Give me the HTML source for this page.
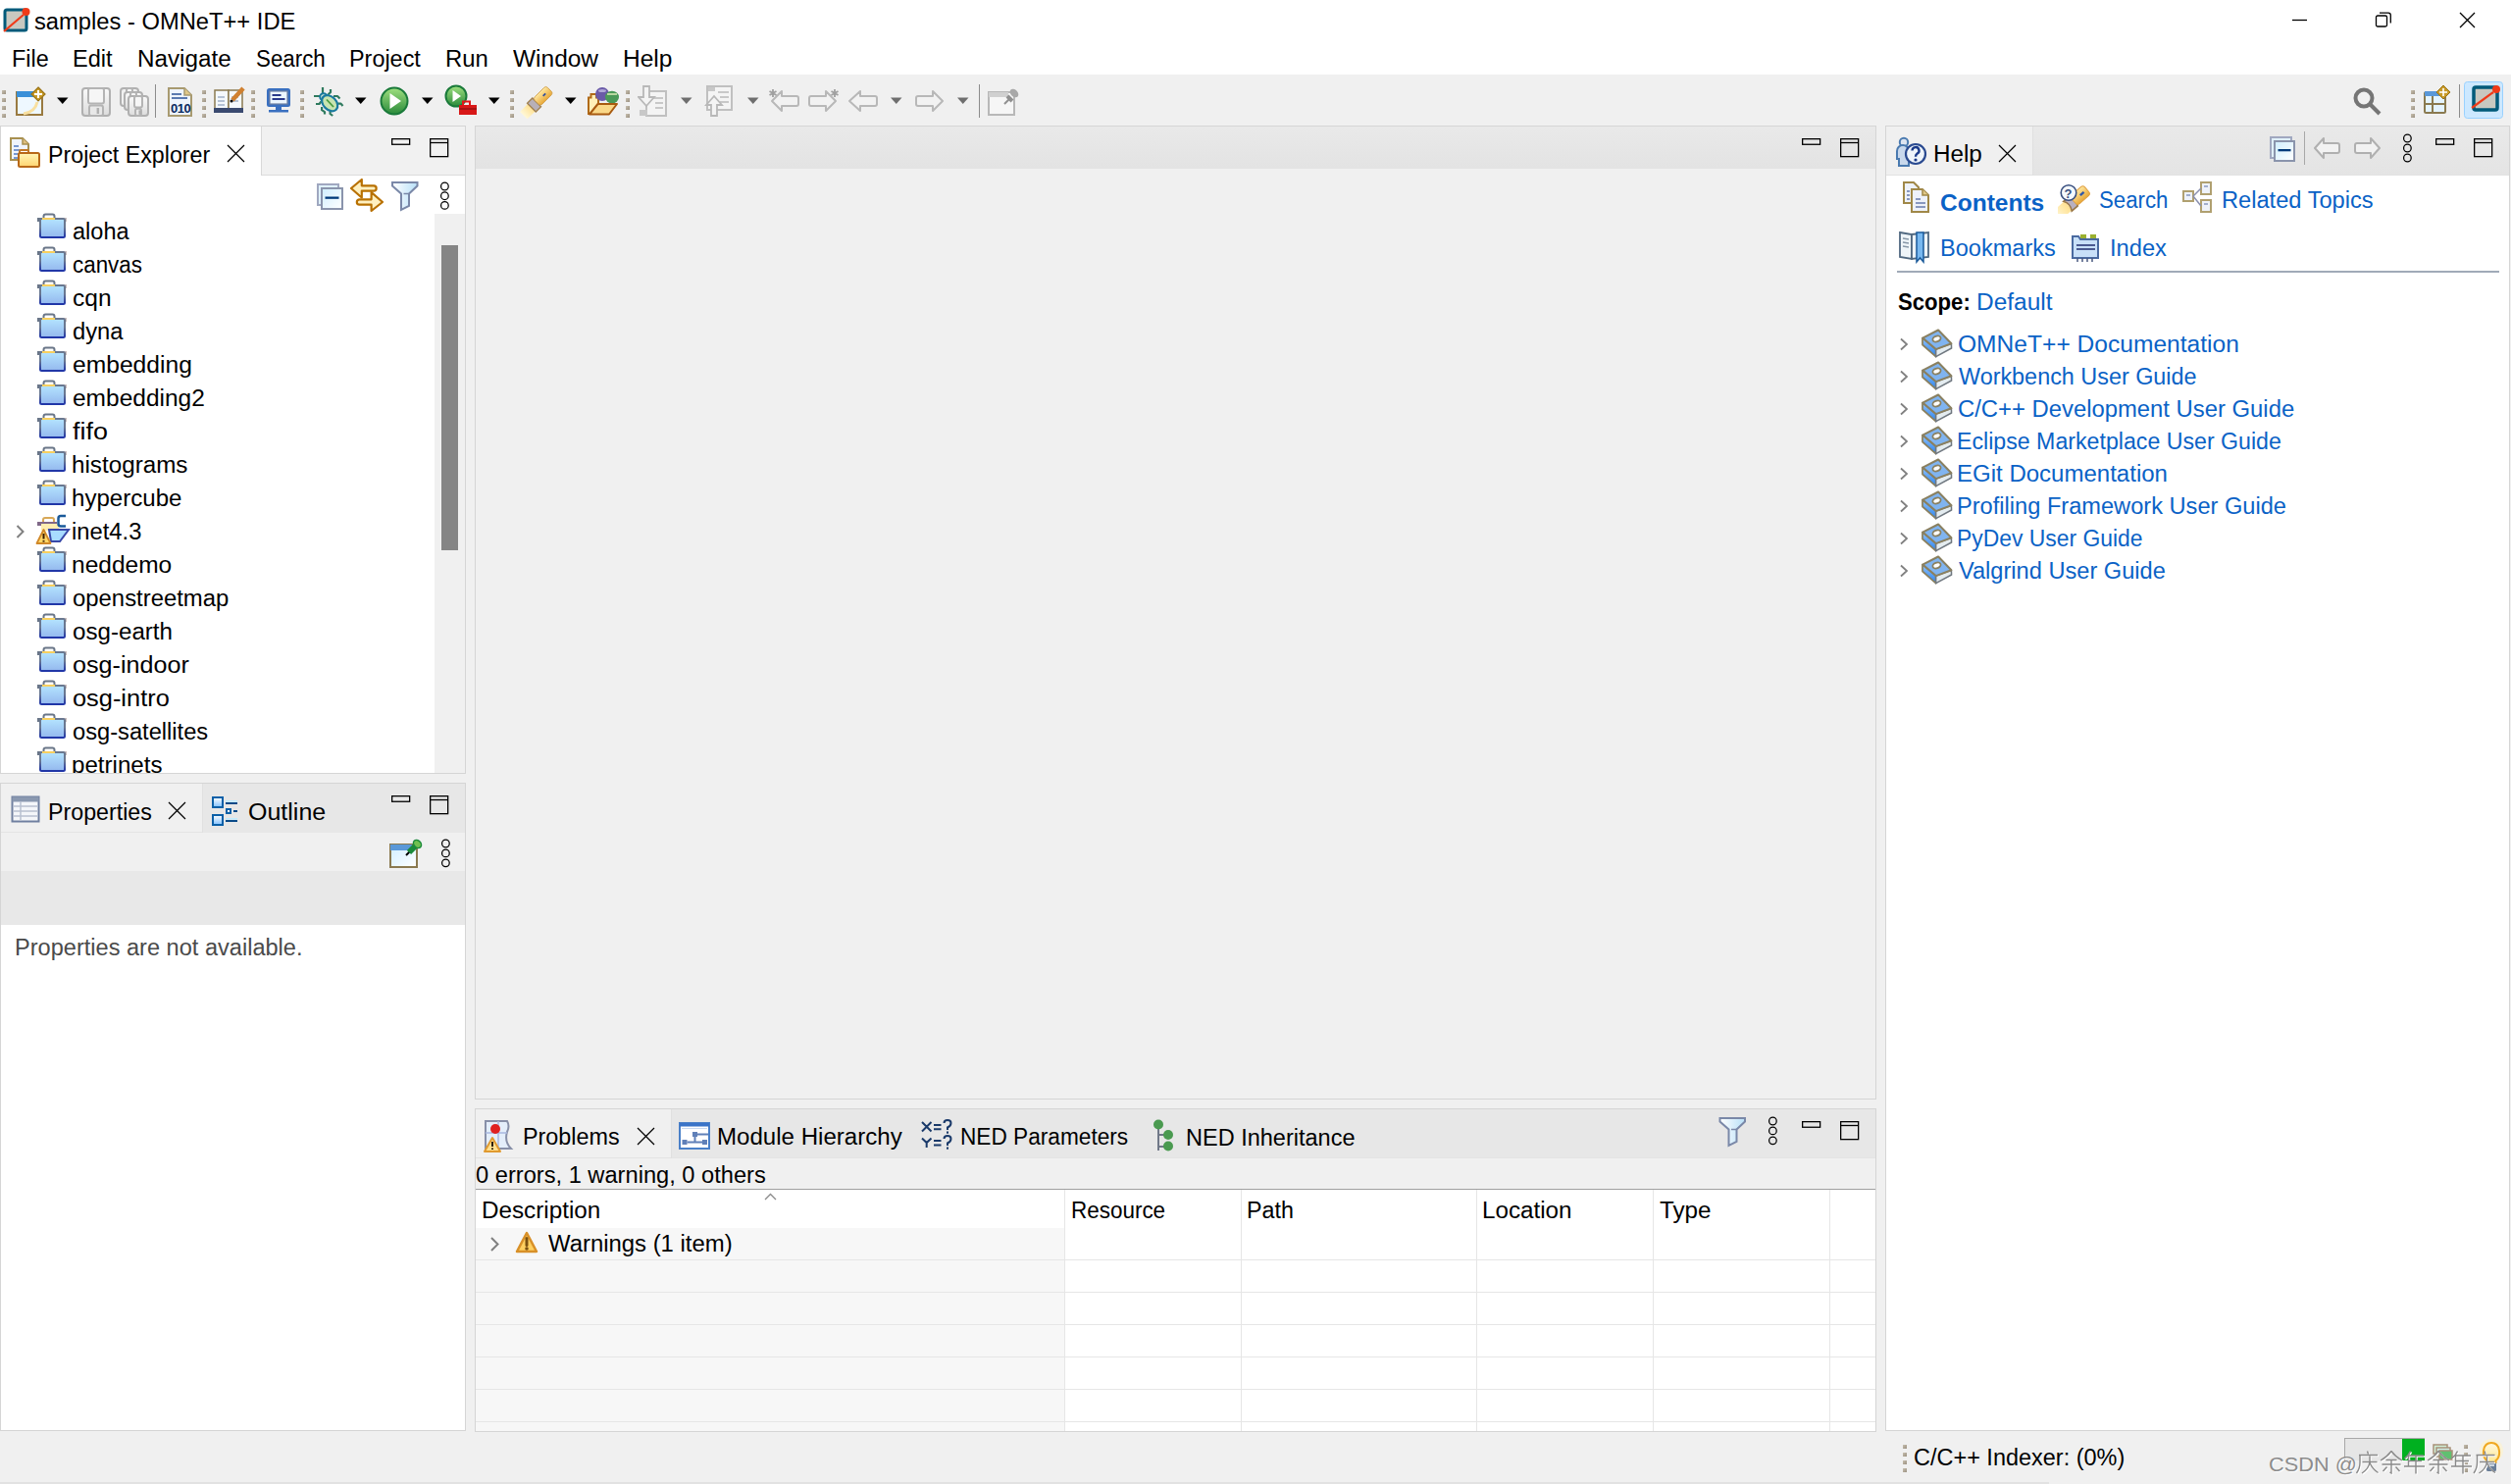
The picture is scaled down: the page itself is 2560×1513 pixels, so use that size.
<!DOCTYPE html>
<html><head><meta charset="utf-8"><style>
html,body{margin:0;padding:0;}
body{width:2560px;height:1513px;overflow:hidden;background:#f0f0f0;position:relative;font-family:"Liberation Sans",sans-serif;}
.a{position:absolute;}
.t{white-space:pre;}
svg{display:block;}
</style></head><body>
<div class="a" style="left:0px;top:0px;width:2560px;height:76px;background:#ffffff;"></div>
<div class="a" style="left:0px;top:1511px;width:2089px;height:2px;background:#e2e2e2;"></div>
<div class="a" style="left:1px;top:129px;width:473px;height:49px;background:#f1f1f1;"></div>
<div class="a" style="left:1px;top:129px;width:265px;height:50px;background:#ffffff;"></div>
<div class="a" style="left:266px;top:129px;width:1px;height:50px;background:#d8d8d8;"></div>
<div class="a" style="left:267px;top:178px;width:207px;height:1px;background:#dcdcdc;"></div>
<div class="a" style="left:1px;top:179px;width:473px;height:609px;background:#ffffff;"></div>
<div class="a" style="left:443px;top:218px;width:31px;height:570px;background:#f0f0f0;"></div>
<div class="a" style="left:450px;top:250px;width:17px;height:311px;background:#858585;"></div>
<div class="a" style="left:0px;top:128px;width:475px;height:1px;background:#d5d5d5;"></div>
<div class="a" style="left:0px;top:788px;width:475px;height:1px;background:#d5d5d5;"></div>
<div class="a" style="left:0px;top:128px;width:1px;height:661px;background:#d5d5d5;"></div>
<div class="a" style="left:474px;top:128px;width:1px;height:661px;background:#d5d5d5;"></div>
<div class="a" style="left:1px;top:799px;width:473px;height:50px;background:#e7e7e7;"></div>
<div class="a" style="left:1px;top:799px;width:205px;height:50px;background:#f0f0f0;"></div>
<div class="a" style="left:1px;top:849px;width:473px;height:39px;background:#f0f0f0;"></div>
<div class="a" style="left:1px;top:848px;width:205px;height:1px;background:#e4e4e4;"></div>
<div class="a" style="left:206px;top:799px;width:1px;height:50px;background:#e0e0e0;"></div>
<div class="a" style="left:1px;top:888px;width:473px;height:55px;background:#e8e8e8;"></div>
<div class="a" style="left:1px;top:943px;width:473px;height:515px;background:#ffffff;"></div>
<div class="a" style="left:0px;top:798px;width:475px;height:1px;background:#d5d5d5;"></div>
<div class="a" style="left:0px;top:1458px;width:475px;height:1px;background:#d5d5d5;"></div>
<div class="a" style="left:0px;top:798px;width:1px;height:661px;background:#d5d5d5;"></div>
<div class="a" style="left:474px;top:798px;width:1px;height:661px;background:#d5d5d5;"></div>
<div class="a" style="left:485px;top:129px;width:1427px;height:43px;background:linear-gradient(#e9e9e9,#e3e3e3);"></div>
<div class="a" style="left:485px;top:172px;width:1427px;height:948px;background:#f0f0f0;"></div>
<div class="a" style="left:484px;top:128px;width:1429px;height:1px;background:#d5d5d5;"></div>
<div class="a" style="left:484px;top:1120px;width:1429px;height:1px;background:#d5d5d5;"></div>
<div class="a" style="left:484px;top:128px;width:1px;height:993px;background:#d5d5d5;"></div>
<div class="a" style="left:1912px;top:128px;width:1px;height:993px;background:#d5d5d5;"></div>
<div class="a" style="left:485px;top:1131px;width:1427px;height:50px;background:#e7e7e7;"></div>
<div class="a" style="left:485px;top:1131px;width:199px;height:50px;background:#f0f0f0;"></div>
<div class="a" style="left:485px;top:1181px;width:1427px;height:31px;background:#f0f0f0;"></div>
<div class="a" style="left:485px;top:1180px;width:1427px;height:1px;background:#e4e4e4;"></div>
<div class="a" style="left:684px;top:1131px;width:1px;height:50px;background:#e0e0e0;"></div>
<div class="a" style="left:485px;top:1212px;width:1427px;height:1px;background:#a0a0a0;"></div>
<div class="a" style="left:485px;top:1213px;width:1427px;height:246px;background:#ffffff;"></div>
<div class="a" style="left:485px;top:1252px;width:600px;height:207px;background:#f7f7f7;"></div>
<div class="a" style="left:485px;top:1284px;width:1427px;height:1px;background:#e6e6e6;"></div>
<div class="a" style="left:485px;top:1317px;width:1427px;height:1px;background:#e6e6e6;"></div>
<div class="a" style="left:485px;top:1350px;width:1427px;height:1px;background:#e6e6e6;"></div>
<div class="a" style="left:485px;top:1383px;width:1427px;height:1px;background:#e6e6e6;"></div>
<div class="a" style="left:485px;top:1416px;width:1427px;height:1px;background:#e6e6e6;"></div>
<div class="a" style="left:485px;top:1449px;width:1427px;height:1px;background:#e6e6e6;"></div>
<div class="a" style="left:1085px;top:1213px;width:1px;height:246px;background:#e6e6e6;"></div>
<div class="a" style="left:1265px;top:1213px;width:1px;height:246px;background:#e6e6e6;"></div>
<div class="a" style="left:1505px;top:1213px;width:1px;height:246px;background:#e6e6e6;"></div>
<div class="a" style="left:1685px;top:1213px;width:1px;height:246px;background:#e6e6e6;"></div>
<div class="a" style="left:1865px;top:1213px;width:1px;height:246px;background:#e6e6e6;"></div>
<div class="a" style="left:484px;top:1130px;width:1429px;height:1px;background:#d5d5d5;"></div>
<div class="a" style="left:484px;top:1459px;width:1429px;height:1px;background:#d5d5d5;"></div>
<div class="a" style="left:484px;top:1130px;width:1px;height:330px;background:#d5d5d5;"></div>
<div class="a" style="left:1912px;top:1130px;width:1px;height:330px;background:#d5d5d5;"></div>
<div class="a" style="left:1923px;top:129px;width:635px;height:50px;background:linear-gradient(#e9e9e9,#e4e4e4);"></div>
<div class="a" style="left:1923px;top:129px;width:149px;height:50px;background:#f0f0f0;"></div>
<div class="a" style="left:1923px;top:179px;width:635px;height:1279px;background:#ffffff;"></div>
<div class="a" style="left:1923px;top:178px;width:635px;height:1px;background:#e2e2e2;"></div>
<div class="a" style="left:2072px;top:129px;width:1px;height:50px;background:#e0e0e0;"></div>
<div class="a" style="left:1934px;top:276px;width:614px;height:2px;background:#a0aab8;"></div>
<div class="a" style="left:1922px;top:128px;width:637px;height:1px;background:#d5d5d5;"></div>
<div class="a" style="left:1922px;top:1458px;width:637px;height:1px;background:#d5d5d5;"></div>
<div class="a" style="left:1922px;top:128px;width:1px;height:1331px;background:#d5d5d5;"></div>
<div class="a" style="left:2558px;top:128px;width:1px;height:1331px;background:#d5d5d5;"></div>
<div class="a t" style="left:35.11px;top:11.03px;font-size:23px;line-height:23px;color:#000;font-weight:400;transform:scaleX(1.0316);transform-origin:0 0;">samples - OMNeT++ IDE</div>
<div class="a t" style="left:12.13px;top:49.33px;font-size:23px;line-height:23px;color:#000;font-weight:400;transform:scaleX(1.0155);transform-origin:0 0;">File</div>
<div class="a t" style="left:73.92px;top:49.33px;font-size:23px;line-height:23px;color:#000;font-weight:400;transform:scaleX(1.0238);transform-origin:0 0;">Edit</div>
<div class="a t" style="left:140.06px;top:49.33px;font-size:23px;line-height:23px;color:#000;font-weight:400;transform:scaleX(1.0537);transform-origin:0 0;">Navigate</div>
<div class="a t" style="left:260.50px;top:49.33px;font-size:23px;line-height:23px;color:#000;font-weight:400;transform:scaleX(0.9704);transform-origin:0 0;">Search</div>
<div class="a t" style="left:355.83px;top:49.33px;font-size:23px;line-height:23px;color:#000;font-weight:400;transform:scaleX(1.0176);transform-origin:0 0;">Project</div>
<div class="a t" style="left:453.89px;top:49.33px;font-size:23px;line-height:23px;color:#000;font-weight:400;transform:scaleX(1.0363);transform-origin:0 0;">Run</div>
<div class="a t" style="left:523.38px;top:49.33px;font-size:23px;line-height:23px;color:#000;font-weight:400;transform:scaleX(1.0640);transform-origin:0 0;">Window</div>
<div class="a t" style="left:635.04px;top:49.33px;font-size:23px;line-height:23px;color:#000;font-weight:400;transform:scaleX(1.0650);transform-origin:0 0;">Help</div>
<div class="a t" style="left:48.54px;top:146.63px;font-size:23px;line-height:23px;color:#000;font-weight:400;transform:scaleX(1.0095);transform-origin:0 0;">Project Explorer</div>
<div class="a" style="left:0px;top:218px;width:443px;height:570px;overflow:hidden">
<div class="a t" style="left:73.66px;top:7.03px;font-size:23px;line-height:23px;color:#000;font-weight:400;transform:scaleX(1.0232);transform-origin:0 0;">aloha</div>
<div class="a t" style="left:73.70px;top:41.03px;font-size:23px;line-height:23px;color:#000;font-weight:400;transform:scaleX(0.9735);transform-origin:0 0;">canvas</div>
<div class="a t" style="left:73.62px;top:75.03px;font-size:23px;line-height:23px;color:#000;font-weight:400;transform:scaleX(1.0654);transform-origin:0 0;">cqn</div>
<div class="a t" style="left:73.65px;top:109.03px;font-size:23px;line-height:23px;color:#000;font-weight:400;transform:scaleX(1.0332);transform-origin:0 0;">dyna</div>
<div class="a t" style="left:73.62px;top:143.03px;font-size:23px;line-height:23px;color:#000;font-weight:400;transform:scaleX(1.0706);transform-origin:0 0;">embedding</div>
<div class="a t" style="left:73.62px;top:177.03px;font-size:23px;line-height:23px;color:#000;font-weight:400;transform:scaleX(1.0647);transform-origin:0 0;">embedding2</div>
<div class="a t" style="left:74.20px;top:211.03px;font-size:23px;line-height:23px;color:#000;font-weight:400;transform:scaleX(1.1719);transform-origin:0 0;">fifo</div>
<div class="a t" style="left:72.90px;top:245.03px;font-size:23px;line-height:23px;color:#000;font-weight:400;transform:scaleX(1.0531);transform-origin:0 0;">histograms</div>
<div class="a t" style="left:72.91px;top:279.03px;font-size:23px;line-height:23px;color:#000;font-weight:400;transform:scaleX(1.0469);transform-origin:0 0;">hypercube</div>
<div class="a t" style="left:73.06px;top:313.03px;font-size:23px;line-height:23px;color:#000;font-weight:400;transform:scaleX(1.0333);transform-origin:0 0;">inet4.3</div>
<div class="a t" style="left:73.01px;top:347.03px;font-size:23px;line-height:23px;color:#000;font-weight:400;transform:scaleX(1.0653);transform-origin:0 0;">neddemo</div>
<div class="a t" style="left:73.64px;top:381.03px;font-size:23px;line-height:23px;color:#000;font-weight:400;transform:scaleX(1.0385);transform-origin:0 0;">openstreetmap</div>
<div class="a t" style="left:73.63px;top:415.03px;font-size:23px;line-height:23px;color:#000;font-weight:400;transform:scaleX(1.0498);transform-origin:0 0;">osg-earth</div>
<div class="a t" style="left:73.59px;top:449.03px;font-size:23px;line-height:23px;color:#000;font-weight:400;transform:scaleX(1.0930);transform-origin:0 0;">osg-indoor</div>
<div class="a t" style="left:73.58px;top:483.03px;font-size:23px;line-height:23px;color:#000;font-weight:400;transform:scaleX(1.1035);transform-origin:0 0;">osg-intro</div>
<div class="a t" style="left:73.65px;top:517.03px;font-size:23px;line-height:23px;color:#000;font-weight:400;transform:scaleX(1.0296);transform-origin:0 0;">osg-satellites</div>
<div class="a t" style="left:73.03px;top:551.03px;font-size:23px;line-height:23px;color:#000;font-weight:400;transform:scaleX(1.0488);transform-origin:0 0;">petrinets</div>
</div>
<div class="a t" style="left:48.84px;top:816.83px;font-size:23px;line-height:23px;color:#000;font-weight:400;transform:scaleX(1.0094);transform-origin:0 0;">Properties</div>
<div class="a t" style="left:252.88px;top:816.83px;font-size:23px;line-height:23px;color:#000;font-weight:400;transform:scaleX(1.0870);transform-origin:0 0;">Outline</div>
<div class="a t" style="left:15.31px;top:955.03px;font-size:23px;line-height:23px;color:#4a4a4a;font-weight:400;transform:scaleX(1.0249);transform-origin:0 0;">Properties are not available.</div>
<div class="a t" style="left:533.13px;top:1148.03px;font-size:23px;line-height:23px;color:#000;font-weight:400;transform:scaleX(1.0156);transform-origin:0 0;">Problems</div>
<div class="a t" style="left:730.77px;top:1148.03px;font-size:23px;line-height:23px;color:#000;font-weight:400;transform:scaleX(1.0473);transform-origin:0 0;">Module Hierarchy</div>
<div class="a t" style="left:978.59px;top:1148.03px;font-size:23px;line-height:23px;color:#000;font-weight:400;transform:scaleX(0.9846);transform-origin:0 0;">NED Parameters</div>
<div class="a t" style="left:1208.52px;top:1148.53px;font-size:23px;line-height:23px;color:#000;font-weight:400;transform:scaleX(1.0220);transform-origin:0 0;">NED Inheritance</div>
<div class="a t" style="left:485.05px;top:1187.03px;font-size:23px;line-height:23px;color:#000;font-weight:400;transform:scaleX(1.0284);transform-origin:0 0;">0 errors, 1 warning, 0 others</div>
<div class="a t" style="left:491.06px;top:1222.63px;font-size:23px;line-height:23px;color:#000;font-weight:400;transform:scaleX(1.0539);transform-origin:0 0;">Description</div>
<div class="a t" style="left:1091.60px;top:1222.63px;font-size:23px;line-height:23px;color:#000;font-weight:400;transform:scaleX(0.9762);transform-origin:0 0;">Resource</div>
<div class="a t" style="left:1271.04px;top:1222.63px;font-size:23px;line-height:23px;color:#000;font-weight:400;transform:scaleX(1.0126);transform-origin:0 0;">Path</div>
<div class="a t" style="left:1510.76px;top:1222.63px;font-size:23px;line-height:23px;color:#000;font-weight:400;transform:scaleX(1.0523);transform-origin:0 0;">Location</div>
<div class="a t" style="left:1691.52px;top:1222.63px;font-size:23px;line-height:23px;color:#000;font-weight:400;transform:scaleX(1.0534);transform-origin:0 0;">Type</div>
<div class="a t" style="left:558.68px;top:1257.03px;font-size:23px;line-height:23px;color:#000;font-weight:400;transform:scaleX(1.0388);transform-origin:0 0;">Warnings (1 item)</div>
<div class="a t" style="left:1970.66px;top:146.23px;font-size:23px;line-height:23px;color:#000;font-weight:400;transform:scaleX(1.0538);transform-origin:0 0;">Help</div>
<div class="a t" style="left:1977.82px;top:196.33px;font-size:23px;line-height:23px;color:#0a62c6;font-weight:700;transform:scaleX(1.0660);transform-origin:0 0;">Contents</div>
<div class="a t" style="left:2139.50px;top:193.03px;font-size:23px;line-height:23px;color:#0a62c6;font-weight:400;transform:scaleX(0.9662);transform-origin:0 0;">Search</div>
<div class="a t" style="left:2265.11px;top:193.03px;font-size:23px;line-height:23px;color:#0a62c6;font-weight:400;transform:scaleX(1.0279);transform-origin:0 0;">Related Topics</div>
<div class="a t" style="left:1977.52px;top:242.33px;font-size:23px;line-height:23px;color:#0a62c6;font-weight:400;transform:scaleX(1.0244);transform-origin:0 0;">Bookmarks</div>
<div class="a t" style="left:2150.87px;top:242.33px;font-size:23px;line-height:23px;color:#0a62c6;font-weight:400;transform:scaleX(1.0290);transform-origin:0 0;">Index</div>
<div class="a t" style="left:1935.34px;top:297.03px;font-size:23px;line-height:23px;color:#000;font-weight:700;transform:scaleX(0.9617);transform-origin:0 0;">Scope:</div>
<div class="a t" style="left:2015.34px;top:297.03px;font-size:23px;line-height:23px;color:#0a62c6;font-weight:400;transform:scaleX(1.0630);transform-origin:0 0;">Default</div>
<div class="a t" style="left:1995.89px;top:339.83px;font-size:23px;line-height:23px;color:#0a62c6;font-weight:400;transform:scaleX(1.0688);transform-origin:0 0;">OMNeT++ Documentation</div>
<div class="a t" style="left:1996.88px;top:372.83px;font-size:23px;line-height:23px;color:#0a62c6;font-weight:400;transform:scaleX(1.0165);transform-origin:0 0;">Workbench User Guide</div>
<div class="a t" style="left:1995.81px;top:405.83px;font-size:23px;line-height:23px;color:#0a62c6;font-weight:400;transform:scaleX(1.0364);transform-origin:0 0;">C/C++ Development User Guide</div>
<div class="a t" style="left:1995.15px;top:438.83px;font-size:23px;line-height:23px;color:#0a62c6;font-weight:400;transform:scaleX(1.0071);transform-origin:0 0;">Eclipse Marketplace User Guide</div>
<div class="a t" style="left:1995.08px;top:471.83px;font-size:23px;line-height:23px;color:#0a62c6;font-weight:400;transform:scaleX(1.0443);transform-origin:0 0;">EGit Documentation</div>
<div class="a t" style="left:1995.11px;top:504.83px;font-size:23px;line-height:23px;color:#0a62c6;font-weight:400;transform:scaleX(1.0268);transform-origin:0 0;">Profiling Framework User Guide</div>
<div class="a t" style="left:1995.17px;top:537.83px;font-size:23px;line-height:23px;color:#0a62c6;font-weight:400;transform:scaleX(0.9953);transform-origin:0 0;">PyDev User Guide</div>
<div class="a t" style="left:1996.88px;top:570.83px;font-size:23px;line-height:23px;color:#0a62c6;font-weight:400;transform:scaleX(1.0262);transform-origin:0 0;">Valgrind User Guide</div>
<div class="a t" style="left:1951.43px;top:1475.23px;font-size:23px;line-height:23px;color:#000;font-weight:400;transform:scaleX(1.0207);transform-origin:0 0;">C/C++ Indexer: (0%)</div>
<svg width="0" height="0" style="position:absolute"><defs>
<linearGradient id="gFoldB" x1="0" y1="0" x2="0" y2="1"><stop offset="0" stop-color="#b4e4ff"/><stop offset="1" stop-color="#94b8ee"/></linearGradient>
<linearGradient id="gFoldS" x1="0" y1="0" x2="0" y2="1"><stop offset="0" stop-color="#6a7890"/><stop offset="0.45" stop-color="#6a7890"/><stop offset="1" stop-color="#1f35a8"/></linearGradient>
<linearGradient id="gYel" x1="0" y1="0" x2="0" y2="1"><stop offset="0" stop-color="#fff6b8"/><stop offset="1" stop-color="#ffd470"/></linearGradient>
<linearGradient id="gLB" x1="0" y1="0" x2="1" y2="1"><stop offset="0" stop-color="#cfeeff"/><stop offset="1" stop-color="#ffffff"/></linearGradient>
<linearGradient id="gGrn" x1="0" y1="0" x2="0" y2="1"><stop offset="0" stop-color="#a0e080"/><stop offset="1" stop-color="#2a8a3a"/></linearGradient>
<linearGradient id="gGray" x1="0" y1="0" x2="0" y2="1"><stop offset="0" stop-color="#fafafa"/><stop offset="1" stop-color="#dcdcdc"/></linearGradient>
<linearGradient id="gGold" x1="0" y1="0" x2="1" y2="0"><stop offset="0" stop-color="#fff4c0"/><stop offset="1" stop-color="#e8b040"/></linearGradient>
<linearGradient id="gTip" x1="0" y1="0" x2="1" y2="0"><stop offset="0" stop-color="#fff8d8"/><stop offset="1" stop-color="#ffe090"/></linearGradient><linearGradient id="gPen" x1="0" y1="0" x2="0" y2="1"><stop offset="0" stop-color="#ffe8a0"/><stop offset="1" stop-color="#e8a838"/></linearGradient>
<linearGradient id="gOut" x1="0" y1="0" x2="0" y2="1"><stop offset="0" stop-color="#ffffff"/><stop offset="1" stop-color="#80c0ff"/></linearGradient>
<linearGradient id="gSpine" x1="0" y1="0" x2="0" y2="1"><stop offset="0" stop-color="#90c0f8"/><stop offset="1" stop-color="#2a84f0"/></linearGradient>
<linearGradient id="gBulb" x1="0" y1="0" x2="0" y2="1"><stop offset="0" stop-color="#fff8e0"/><stop offset="1" stop-color="#ffe890"/></linearGradient>
<linearGradient id="gFilt" x1="0" y1="0" x2="1" y2="0"><stop offset="0" stop-color="#ffffff"/><stop offset="1" stop-color="#b8e0f8"/></linearGradient>
<linearGradient id="gGrip" x1="0" y1="0" x2="1" y2="1"><stop offset="0" stop-color="#c8c0b0"/><stop offset="1" stop-color="#9a9080"/></linearGradient>
</defs></svg>
<svg class="a" style="left:2px;top:6px;" width="30" height="30" viewBox="0 0 30 30"><rect x="3" y="4" width="22" height="21" rx="2" fill="#c8c8c0" stroke="#005a7a" stroke-width="3"/><line x1="2" y1="26" x2="22" y2="9" stroke="#f03a18" stroke-width="2.2"/><circle cx="24.5" cy="6" r="4" fill="#f03a18"/></svg>
<svg class="a" style="left:2330px;top:12px;" width="30" height="20" viewBox="0 0 30 20"><line x1="7" y1="8.5" x2="22" y2="8.5" stroke="#000" stroke-width="1.3"/></svg>
<svg class="a" style="left:2418px;top:8px;" width="24" height="24" viewBox="0 0 24 24"><rect x="4.5" y="8" width="11" height="11" rx="1.5" fill="none" stroke="#000" stroke-width="1.3"/><path d="M8 5.2 H17 a2.3 2.3 0 0 1 2.3 2.3 V15.5" fill="none" stroke="#000" stroke-width="1.3"/></svg>
<svg class="a" style="left:2503px;top:8px;" width="26" height="26" viewBox="0 0 26 26"><path d="M5 5 L20 20 M20 5 L5 20" stroke="#000" stroke-width="1.3"/></svg>
<svg class="a" style="left:2px;top:92px;" width="4" height="28" viewBox="0 0 4 28"><rect x="0" y="0" width="4" height="4" fill="url(#gGrip)"/><rect x="0" y="8" width="4" height="4" fill="url(#gGrip)"/><rect x="0" y="16" width="4" height="4" fill="url(#gGrip)"/><rect x="0" y="24" width="4" height="4" fill="url(#gGrip)"/></svg>
<svg class="a" style="left:206px;top:92px;" width="4" height="28" viewBox="0 0 4 28"><rect x="0" y="0" width="4" height="4" fill="url(#gGrip)"/><rect x="0" y="8" width="4" height="4" fill="url(#gGrip)"/><rect x="0" y="16" width="4" height="4" fill="url(#gGrip)"/><rect x="0" y="24" width="4" height="4" fill="url(#gGrip)"/></svg>
<svg class="a" style="left:256px;top:92px;" width="4" height="28" viewBox="0 0 4 28"><rect x="0" y="0" width="4" height="4" fill="url(#gGrip)"/><rect x="0" y="8" width="4" height="4" fill="url(#gGrip)"/><rect x="0" y="16" width="4" height="4" fill="url(#gGrip)"/><rect x="0" y="24" width="4" height="4" fill="url(#gGrip)"/></svg>
<svg class="a" style="left:306px;top:92px;" width="4" height="28" viewBox="0 0 4 28"><rect x="0" y="0" width="4" height="4" fill="url(#gGrip)"/><rect x="0" y="8" width="4" height="4" fill="url(#gGrip)"/><rect x="0" y="16" width="4" height="4" fill="url(#gGrip)"/><rect x="0" y="24" width="4" height="4" fill="url(#gGrip)"/></svg>
<svg class="a" style="left:520px;top:92px;" width="4" height="28" viewBox="0 0 4 28"><rect x="0" y="0" width="4" height="4" fill="url(#gGrip)"/><rect x="0" y="8" width="4" height="4" fill="url(#gGrip)"/><rect x="0" y="16" width="4" height="4" fill="url(#gGrip)"/><rect x="0" y="24" width="4" height="4" fill="url(#gGrip)"/></svg>
<svg class="a" style="left:638px;top:92px;" width="4" height="28" viewBox="0 0 4 28"><rect x="0" y="0" width="4" height="4" fill="url(#gGrip)"/><rect x="0" y="8" width="4" height="4" fill="url(#gGrip)"/><rect x="0" y="16" width="4" height="4" fill="url(#gGrip)"/><rect x="0" y="24" width="4" height="4" fill="url(#gGrip)"/></svg>
<svg class="a" style="left:2458px;top:92px;" width="4" height="28" viewBox="0 0 4 28"><rect x="0" y="0" width="4" height="4" fill="url(#gGrip)"/><rect x="0" y="8" width="4" height="4" fill="url(#gGrip)"/><rect x="0" y="16" width="4" height="4" fill="url(#gGrip)"/><rect x="0" y="24" width="4" height="4" fill="url(#gGrip)"/></svg>
<svg class="a" style="left:58px;top:99px;" width="12" height="8" viewBox="0 0 12 8"><path d="M0 0.5 H11.5 L5.75 7 Z" fill="#000"/></svg>
<svg class="a" style="left:362px;top:99px;" width="12" height="8" viewBox="0 0 12 8"><path d="M0 0.5 H11.5 L5.75 7 Z" fill="#000"/></svg>
<svg class="a" style="left:430px;top:99px;" width="12" height="8" viewBox="0 0 12 8"><path d="M0 0.5 H11.5 L5.75 7 Z" fill="#000"/></svg>
<svg class="a" style="left:498px;top:99px;" width="12" height="8" viewBox="0 0 12 8"><path d="M0 0.5 H11.5 L5.75 7 Z" fill="#000"/></svg>
<svg class="a" style="left:576px;top:99px;" width="12" height="8" viewBox="0 0 12 8"><path d="M0 0.5 H11.5 L5.75 7 Z" fill="#000"/></svg>
<svg class="a" style="left:694px;top:99px;" width="12" height="8" viewBox="0 0 12 8"><path d="M0 0.5 H11.5 L5.75 7 Z" fill="#6e6e6e"/></svg>
<svg class="a" style="left:762px;top:99px;" width="12" height="8" viewBox="0 0 12 8"><path d="M0 0.5 H11.5 L5.75 7 Z" fill="#6e6e6e"/></svg>
<svg class="a" style="left:908px;top:99px;" width="12" height="8" viewBox="0 0 12 8"><path d="M0 0.5 H11.5 L5.75 7 Z" fill="#6e6e6e"/></svg>
<svg class="a" style="left:976px;top:99px;" width="12" height="8" viewBox="0 0 12 8"><path d="M0 0.5 H11.5 L5.75 7 Z" fill="#6e6e6e"/></svg>
<div class="a" style="left:158px;top:86px;width:1px;height:34px;background:#8c8c8c;"></div>
<div class="a" style="left:998px;top:86px;width:1px;height:34px;background:#8c8c8c;"></div>
<div class="a" style="left:2507px;top:86px;width:1px;height:34px;background:#8c8c8c;"></div>
<svg class="a" style="left:14px;top:86px;" width="36" height="34" viewBox="0 0 36 34"><rect x="3" y="8" width="26" height="23" fill="#eef8ff" stroke="#9a7a40" stroke-width="2"/><rect x="3" y="7" width="24" height="6" fill="#3a90d8"/><path d="M10 30 Q22 28 24 18" stroke="#f8e0a0" stroke-width="3" fill="none"/><path d="M25 3 L32 10 L25 17 L18 10 Z" fill="#c89a28" stroke="#9a7418" stroke-width="1.2"/><path d="M25 6 V14 M21 10 H29" stroke="#fff" stroke-width="2"/></svg>
<svg class="a" style="left:82px;top:88px;" width="32" height="32" viewBox="0 0 32 32"><rect x="2" y="2" width="28" height="28" rx="3" fill="url(#gGray)" stroke="#b0b0b0" stroke-width="2"/><rect x="8" y="2" width="16" height="15.600000000000001" rx="2" fill="#f6f6f6" stroke="#b4b4b4" stroke-width="2"/><rect x="9" y="19.6" width="14" height="10.4" rx="2" fill="#e8e8e8" stroke="#b4b4b4" stroke-width="2"/><rect x="16.6" y="22.0" width="2.5" height="6.0" fill="#b0b0b0"/></svg>
<svg class="a" style="left:121px;top:88px;" width="32" height="32" viewBox="0 0 32 32"><rect x="2" y="2" width="18" height="18" rx="3" fill="#f0f0f0" stroke="#b0b0b0" stroke-width="2"/><rect x="8" y="2" width="6" height="10.4" rx="2" fill="#f6f6f6" stroke="#b4b4b4" stroke-width="2"/><rect x="9" y="13.4" width="4" height="6.6" rx="2" fill="#e8e8e8" stroke="#b4b4b4" stroke-width="2"/><rect x="11.4" y="15.0" width="2.5" height="4.0" fill="#b0b0b0"/><rect x="6" y="6" width="18" height="18" rx="3" fill="url(#gGray)" stroke="#b0b0b0" stroke-width="2"/><rect x="12" y="6" width="6" height="10.4" rx="2" fill="#f6f6f6" stroke="#b4b4b4" stroke-width="2"/><rect x="13" y="17.4" width="4" height="6.6" rx="2" fill="#e8e8e8" stroke="#b4b4b4" stroke-width="2"/><rect x="15.4" y="19.0" width="2.5" height="4.0" fill="#b0b0b0"/><rect x="10" y="10" width="20" height="20" rx="3" fill="url(#gGray)" stroke="#b0b0b0" stroke-width="2"/><rect x="16" y="10" width="8" height="11.440000000000001" rx="2" fill="#f6f6f6" stroke="#b4b4b4" stroke-width="2"/><rect x="17" y="22.64" width="6" height="7.359999999999999" rx="2" fill="#e8e8e8" stroke="#b4b4b4" stroke-width="2"/><rect x="20.44" y="24.4" width="2.5" height="4.4" fill="#b0b0b0"/></svg>
<svg class="a" style="left:170px;top:88px;" width="30" height="32" viewBox="0 0 30 32"><path d="M2 2 H18 L25 9 V30 H2 Z" fill="#eef4fc" stroke="#a89a70" stroke-width="2"/><path d="M18 2 V9 H25" fill="#e0c888" stroke="#a89a70" stroke-width="1.5"/><rect x="5" y="7" width="10" height="2" fill="#5a7ab0"/><rect x="5" y="11" width="16" height="2" fill="#5a7ab0"/><text x="4" y="27" font-family="Liberation Sans" font-weight="700" font-size="13" fill="#0a2a60" letter-spacing="-0.5">010</text></svg>
<svg class="a" style="left:218px;top:88px;" width="32" height="30" viewBox="0 0 32 30"><rect x="1" y="4" width="14" height="20" fill="#f4f8fc" stroke="#8a7a50" stroke-width="1.5"/><rect x="15" y="4" width="14" height="20" fill="#f4f8fc" stroke="#8a7a50" stroke-width="1.5"/><rect x="0" y="22" width="30" height="5" fill="#3a4a70"/><path d="M4 11 H11 M4 15 H11 M4 19 H11 M18 11 H25 M18 15 H25" stroke="#a0b0c8" stroke-width="1.5"/><path d="M19 14 L30 2" stroke="#d08030" stroke-width="4.5"/><circle cx="18" cy="15" r="1.5" fill="#000"/></svg>
<svg class="a" style="left:270px;top:88px;" width="28" height="28" viewBox="0 0 28 28"><rect x="2" y="2" width="24" height="19" rx="2.5" fill="#3a70c0"/><rect x="5" y="5" width="18" height="13" fill="#ecf6ff" stroke="#7080a0" stroke-width="1.2"/><rect x="7.5" y="8" width="9" height="2" fill="#2a3a8a"/><rect x="7.5" y="12" width="13" height="2" fill="#2a3a8a"/><rect x="11" y="21" width="6" height="3" fill="#3a70c0"/><rect x="4" y="24" width="20" height="2.5" fill="#3a70c0"/></svg>
<svg class="a" style="left:316px;top:85px;" width="40" height="36" viewBox="0 0 40 36"><g stroke="#2f7a5e" stroke-width="2.2" fill="none" stroke-linejoin="round"><path d="M13 4 V10 M21 6 V9 L18.5 11.5 M4 13 H10 M24 13 H28 L30.5 15.5 M6 21 H9.5 L11.5 18.5 M27.5 20.6 H31.5 L33.5 23 M12.1 24 V27.2 L15 29.1 V31.5 M20.6 27.5 V31 L23.2 33"/></g><circle cx="13.8" cy="13.8" r="3.6" fill="#e0f0d8" stroke="#1a7aa0" stroke-width="2"/><ellipse cx="20.2" cy="20.2" rx="6.6" ry="9.3" transform="rotate(-45 20.2 20.2)" fill="#c8e4b0" stroke="#1a7aa0" stroke-width="2.2"/><path d="M17 16.5 L24 24" stroke="#4a9a40" stroke-width="1.8"/></svg>
<svg class="a" style="left:386px;top:87px;" width="32" height="32" viewBox="0 0 32 32"><circle cx="16" cy="16" r="13.5" fill="url(#gGrn)" stroke="#1a7a3a" stroke-width="2"/><path d="M11.5 8 L23 16 L11.5 24 Z" fill="#fff"/></svg>
<svg class="a" style="left:452px;top:85px;" width="36" height="34" viewBox="0 0 36 34"><circle cx="13" cy="13" r="10.5" fill="url(#gGrn)" stroke="#1a7a3a" stroke-width="2"/><path d="M9.5 7 L18 13 L9.5 19 Z" fill="#fff"/><rect x="20" y="18.5" width="7" height="5" fill="none" stroke="#e01818" stroke-width="2"/><rect x="16" y="22" width="18" height="10" fill="#d81818"/><path d="M16 26 H34" stroke="#8a1010" stroke-width="1.2"/></svg>
<svg class="a" style="left:530px;top:87px;" width="36" height="34" viewBox="0 0 36 34"><g transform="translate(17.5 17) rotate(-45) scale(0.88)"><rect x="-22" y="-6" width="14" height="12" fill="url(#gTip)"/><rect x="-9" y="-7" width="8.5" height="14" fill="#b8b0b8" stroke="#a08050" stroke-width="1.5"/><rect x="-0.5" y="-6" width="21" height="12" rx="3" fill="url(#gPen)" stroke="#d0a050" stroke-width="1"/><rect x="10" y="-1" width="4" height="2" fill="#3050a0"/></g></svg>
<svg class="a" style="left:596px;top:85px;" width="40" height="36" viewBox="0 0 40 36"><path d="M4 31 V14.5 H6.5 V11 H12 V14.5 H14 V31 Z" fill="#fff0b8" stroke="#b06a18" stroke-width="2"/><circle cx="18" cy="11" r="7" fill="#6a5aa8"/><ellipse cx="18" cy="7.5" rx="4" ry="1.5" fill="#b0a8d8"/><ellipse cx="28" cy="14" rx="7" ry="6.3" fill="#4a9a58"/><rect x="23" y="10" width="10" height="2" fill="#b8d8a0"/><path d="M5 31.5 L13.5 21 H33 L25 31.5 Z" fill="#fad888" stroke="#a85a10" stroke-width="2" stroke-linejoin="round"/></svg>
<svg class="a" style="left:650px;top:86px;" width="32" height="34" viewBox="0 0 32 34"><rect x="9" y="7" width="20" height="25" fill="#f4f4f4" stroke="#c0c0c0" stroke-width="2"/><path d="M14 14 H26 M18 19 H26 M18 24 H26" stroke="#c8c8c8" stroke-width="2"/><path d="M6 2 H12 V13 H17 L9 22 L1 13 H6 Z" fill="#f4f4f4" stroke="#b8b8b8" stroke-width="1.8"/><rect x="2" y="26" width="8" height="6" fill="#c8c8c8"/></svg>
<svg class="a" style="left:718px;top:86px;" width="32" height="34" viewBox="0 0 32 34"><rect x="3" y="2" width="25" height="24" fill="#f4f4f4" stroke="#c0c0c0" stroke-width="2"/><rect x="4" y="3" width="7" height="4" fill="#c8c8c8"/><path d="M14 8 H25 M16 13 H25 M16 18 H25" stroke="#c8c8c8" stroke-width="2"/><path d="M7 32 H13 V21 H18 L10 12 L2 21 H7 Z" fill="#f4f4f4" stroke="#b8b8b8" stroke-width="1.8"/></svg>
<svg class="a" style="left:784px;top:87px;" width="34" height="30" viewBox="0 0 34 30"><g transform="translate(0,0)"><path d="M3 16 L13 6 V11 H28 a2 2 0 0 1 2 2 V19 a2 2 0 0 1 -2 2 H13 V26 Z" fill="#f2f2f2" stroke="#b8b8b8" stroke-width="2" stroke-linejoin="round"/></g><path d="M4 4 V12 M0.5 6 L7.5 10 M0.5 10 L7.5 6" stroke="#a0a0a0" stroke-width="1.8"/></svg>
<svg class="a" style="left:823px;top:87px;" width="34" height="30" viewBox="0 0 34 30"><path d="M29 16 L19 6 V11 H4 a2 2 0 0 0 -2 2 V19 a2 2 0 0 0 2 2 H19 V26 Z" fill="#f2f2f2" stroke="#b8b8b8" stroke-width="2" stroke-linejoin="round"/><path d="M28 4 V12 M24.5 6 L31.5 10 M24.5 10 L31.5 6" stroke="#a0a0a0" stroke-width="1.8"/></svg>
<svg class="a" style="left:864px;top:87px;" width="32" height="30" viewBox="0 0 32 30"><path d="M2 16 L13 6 V11 H28 a2 2 0 0 1 2 2 V19 a2 2 0 0 1 -2 2 H13 V26 Z" fill="#f2f2f2" stroke="#b8b8b8" stroke-width="2" stroke-linejoin="round"/></svg>
<svg class="a" style="left:932px;top:87px;" width="32" height="30" viewBox="0 0 32 30"><path d="M29 16 L19 6 V11 H4 a2 2 0 0 0 -2 2 V19 a2 2 0 0 0 2 2 H19 V26 Z" fill="#f2f2f2" stroke="#b8b8b8" stroke-width="2" stroke-linejoin="round"/></svg>
<svg class="a" style="left:1006px;top:86px;" width="36" height="34" viewBox="0 0 36 34"><rect x="2" y="8" width="26" height="23" fill="#f6f6f6" stroke="#b8b8b8" stroke-width="2"/><rect x="2" y="8" width="20" height="5" fill="#d0d0d0"/><path d="M18 20 L23 15" stroke="#909090" stroke-width="2"/><ellipse cx="28" cy="9" rx="5" ry="3.5" transform="rotate(45 28 9)" fill="#a8a8a8"/><path d="M21 12 L26 17" stroke="#909090" stroke-width="4"/></svg>
<svg class="a" style="left:2396px;top:86px;" width="36" height="36" viewBox="0 0 36 36"><circle cx="14" cy="14" r="8.5" fill="none" stroke="#757575" stroke-width="4"/><path d="M20 20 L30 30" stroke="#757575" stroke-width="4"/></svg>
<svg class="a" style="left:2469px;top:86px;" width="34" height="34" viewBox="0 0 34 34"><rect x="3" y="8" width="21" height="21" rx="1.5" fill="#e4f4ff" stroke="#8a7a50" stroke-width="2"/><rect x="3" y="7" width="15" height="5" fill="#5a98d8"/><path d="M11 12 V28 M3 20 H23" stroke="#8a7a50" stroke-width="2"/><path d="M22 1 L29 8 L22 15 L15 8 Z" fill="#c89a28" stroke="#9a7418" stroke-width="1"/><path d="M22 4 V12 M18 8 H26" stroke="#fff" stroke-width="1.6"/></svg>
<svg class="a" style="left:2512px;top:83px;" width="41" height="39" viewBox="0 0 41 39"><rect x="0.5" y="0.5" width="39" height="37" rx="3" fill="#cce8ff" stroke="#99d1ff" stroke-width="1"/><rect x="10" y="6" width="24" height="23" rx="2" fill="#c8c8c0" stroke="#005a7a" stroke-width="3.5"/><line x1="8" y1="27" x2="30" y2="11" stroke="#f03a18" stroke-width="2.2"/><circle cx="33" cy="8" r="4" fill="#f03a18"/></svg>
<svg class="a" style="left:398px;top:140px;" width="22" height="9" viewBox="0 0 22 9"><rect x="1.65" y="1.65" width="18" height="5.6" fill="none" stroke="#000" stroke-width="1.3"/></svg>
<svg class="a" style="left:437px;top:140px;" width="22" height="22" viewBox="0 0 22 22"><rect x="1.65" y="1.65" width="18" height="18" fill="none" stroke="#000" stroke-width="1.3"/><path d="M1.65 5.5 H19.65" stroke="#000" stroke-width="1.3"/></svg>
<svg class="a" style="left:398px;top:810px;" width="22" height="9" viewBox="0 0 22 9"><rect x="1.65" y="1.65" width="18" height="5.6" fill="none" stroke="#000" stroke-width="1.3"/></svg>
<svg class="a" style="left:437px;top:810px;" width="22" height="22" viewBox="0 0 22 22"><rect x="1.65" y="1.65" width="18" height="18" fill="none" stroke="#000" stroke-width="1.3"/><path d="M1.65 5.5 H19.65" stroke="#000" stroke-width="1.3"/></svg>
<svg class="a" style="left:1836px;top:140px;" width="22" height="9" viewBox="0 0 22 9"><rect x="1.65" y="1.65" width="18" height="5.6" fill="none" stroke="#000" stroke-width="1.3"/></svg>
<svg class="a" style="left:1875px;top:140px;" width="22" height="22" viewBox="0 0 22 22"><rect x="1.65" y="1.65" width="18" height="18" fill="none" stroke="#000" stroke-width="1.3"/><path d="M1.65 5.5 H19.65" stroke="#000" stroke-width="1.3"/></svg>
<svg class="a" style="left:1836px;top:1142px;" width="22" height="9" viewBox="0 0 22 9"><rect x="1.65" y="1.65" width="18" height="5.6" fill="none" stroke="#000" stroke-width="1.3"/></svg>
<svg class="a" style="left:1875px;top:1142px;" width="22" height="22" viewBox="0 0 22 22"><rect x="1.65" y="1.65" width="18" height="18" fill="none" stroke="#000" stroke-width="1.3"/><path d="M1.65 5.5 H19.65" stroke="#000" stroke-width="1.3"/></svg>
<svg class="a" style="left:2482px;top:140px;" width="22" height="9" viewBox="0 0 22 9"><rect x="1.65" y="1.65" width="18" height="5.6" fill="none" stroke="#000" stroke-width="1.3"/></svg>
<svg class="a" style="left:2521px;top:140px;" width="22" height="22" viewBox="0 0 22 22"><rect x="1.65" y="1.65" width="18" height="18" fill="none" stroke="#000" stroke-width="1.3"/><path d="M1.65 5.5 H19.65" stroke="#000" stroke-width="1.3"/></svg>
<svg class="a" style="left:231px;top:147px;" width="20" height="20" viewBox="0 0 20 20"><path d="M1 1 L18 18 M18 1 L1 18" stroke="#000" stroke-width="1.2"/></svg>
<svg class="a" style="left:171px;top:817px;" width="20" height="20" viewBox="0 0 20 20"><path d="M1 1 L18 18 M18 1 L1 18" stroke="#000" stroke-width="1.2"/></svg>
<svg class="a" style="left:649px;top:1149px;" width="20" height="20" viewBox="0 0 20 20"><path d="M1 1 L18 18 M18 1 L1 18" stroke="#000" stroke-width="1.2"/></svg>
<svg class="a" style="left:2037px;top:147px;" width="20" height="20" viewBox="0 0 20 20"><path d="M1 1 L18 18 M18 1 L1 18" stroke="#000" stroke-width="1.2"/></svg>
<svg class="a" style="left:447.4px;top:184.8px;" width="12" height="32" viewBox="0 0 12 32"><circle cx="6.4" cy="5.0" r="3.8" fill="none" stroke="#000" stroke-width="1.25"/><circle cx="6.4" cy="14.7" r="3.8" fill="none" stroke="#000" stroke-width="1.25"/><circle cx="6.4" cy="24.4" r="3.8" fill="none" stroke="#000" stroke-width="1.25"/></svg>
<svg class="a" style="left:447.5px;top:854.6px;" width="12" height="32" viewBox="0 0 12 32"><circle cx="6.4" cy="5.0" r="3.8" fill="none" stroke="#000" stroke-width="1.25"/><circle cx="6.4" cy="14.9" r="3.8" fill="none" stroke="#000" stroke-width="1.25"/><circle cx="6.4" cy="24.8" r="3.8" fill="none" stroke="#000" stroke-width="1.25"/></svg>
<svg class="a" style="left:1801.2px;top:1138.4px;" width="12" height="32" viewBox="0 0 12 32"><circle cx="6.4" cy="5.0" r="3.8" fill="none" stroke="#000" stroke-width="1.25"/><circle cx="6.4" cy="14.9" r="3.8" fill="none" stroke="#000" stroke-width="1.25"/><circle cx="6.4" cy="24.8" r="3.8" fill="none" stroke="#000" stroke-width="1.25"/></svg>
<svg class="a" style="left:2447.5px;top:136.3px;" width="12" height="32" viewBox="0 0 12 32"><circle cx="6.4" cy="5.0" r="3.8" fill="none" stroke="#000" stroke-width="1.25"/><circle cx="6.4" cy="15.0" r="3.8" fill="none" stroke="#000" stroke-width="1.25"/><circle cx="6.4" cy="25.0" r="3.8" fill="none" stroke="#000" stroke-width="1.25"/></svg>
<svg class="a" style="left:8px;top:138px;" width="36" height="34" viewBox="0 0 36 34"><path d="M3 3 H15 L21 9 V25 H3 Z" fill="#f0f4fc" stroke="#a89050" stroke-width="2"/><path d="M15 3 V9 H21" fill="#e0c080" stroke="#a89050" stroke-width="1.5"/><path d="M6 11 H11 M6 15 H12 M6 19 H11 M6 23 H10" stroke="#7898d0" stroke-width="1.8"/><rect x="12" y="15" width="9" height="5" rx="1" fill="#fff" stroke="#c07828" stroke-width="2"/><rect x="11" y="18" width="21" height="14" rx="1.5" fill="url(#gYel)" stroke="#b86818" stroke-width="2"/></svg>
<svg class="a" style="left:321px;top:185px;" width="30" height="30" viewBox="0 0 30 30"><rect x="3" y="3" width="21" height="21" fill="#e0f2ff" stroke="#a0a8c0" stroke-width="2"/><rect x="7" y="7" width="21" height="21" fill="url(#gLB)" stroke="#8a94ac" stroke-width="2"/><rect x="10.5" y="15.5" width="14" height="2.3" fill="#003a7a"/></svg>
<svg class="a" style="left:356px;top:182px;" width="36" height="36" viewBox="0 0 36 36"><path d="M2 10 L12.8 1 V7.3 H25 a2.6 2.6 0 0 1 0 5.3 H12.8 V19.5 Z" fill="#fff0c0" stroke="#b87000" stroke-width="2.2" stroke-linejoin="round"/><path d="M34 24 L22.6 14.1 V21.3 H10.5 a2.7 2.7 0 0 0 0 5.4 H22.6 V33 Z" fill="#fff0c0" stroke="#b87000" stroke-width="2.2" stroke-linejoin="round"/></svg>
<svg class="a" style="left:397px;top:183px;" width="32" height="34" viewBox="0 0 32 34"><path d="M3 3 H28.5 V6.5 L20 14.5 V27 L12 31 V14.5 L3 6.5 Z" fill="url(#gFilt)" stroke="#7a88a8" stroke-width="2" stroke-linejoin="miter"/><path d="M14.5 14.5 H19.5" stroke="#7a88a8" stroke-width="1.5"/></svg>
<div class="a" style="left:0px;top:212px;width:443px;height:576px;overflow:hidden">
<svg class="a" style="left:37px;top:4px;" width="32" height="28" viewBox="0 0 32 28"><rect x="7.5" y="2.5" width="11" height="5.5" rx="2" fill="#fff" stroke="#6a7688" stroke-width="2"/><rect x="1" y="6" width="30" height="4" fill="#6a7688"/><rect x="27" y="6" width="4" height="4" fill="#c8bcbc"/><rect x="4" y="7" width="25" height="19" rx="1.5" fill="url(#gFoldB)" stroke="url(#gFoldS)" stroke-width="2"/><rect x="6" y="6" width="13" height="2" fill="#f8d060"/></svg>
<svg class="a" style="left:37px;top:38px;" width="32" height="28" viewBox="0 0 32 28"><rect x="7.5" y="2.5" width="11" height="5.5" rx="2" fill="#fff" stroke="#6a7688" stroke-width="2"/><rect x="1" y="6" width="30" height="4" fill="#6a7688"/><rect x="27" y="6" width="4" height="4" fill="#c8bcbc"/><rect x="4" y="7" width="25" height="19" rx="1.5" fill="url(#gFoldB)" stroke="url(#gFoldS)" stroke-width="2"/><rect x="6" y="6" width="13" height="2" fill="#f8d060"/></svg>
<svg class="a" style="left:37px;top:72px;" width="32" height="28" viewBox="0 0 32 28"><rect x="7.5" y="2.5" width="11" height="5.5" rx="2" fill="#fff" stroke="#6a7688" stroke-width="2"/><rect x="1" y="6" width="30" height="4" fill="#6a7688"/><rect x="27" y="6" width="4" height="4" fill="#c8bcbc"/><rect x="4" y="7" width="25" height="19" rx="1.5" fill="url(#gFoldB)" stroke="url(#gFoldS)" stroke-width="2"/><rect x="6" y="6" width="13" height="2" fill="#f8d060"/></svg>
<svg class="a" style="left:37px;top:106px;" width="32" height="28" viewBox="0 0 32 28"><rect x="7.5" y="2.5" width="11" height="5.5" rx="2" fill="#fff" stroke="#6a7688" stroke-width="2"/><rect x="1" y="6" width="30" height="4" fill="#6a7688"/><rect x="27" y="6" width="4" height="4" fill="#c8bcbc"/><rect x="4" y="7" width="25" height="19" rx="1.5" fill="url(#gFoldB)" stroke="url(#gFoldS)" stroke-width="2"/><rect x="6" y="6" width="13" height="2" fill="#f8d060"/></svg>
<svg class="a" style="left:37px;top:140px;" width="32" height="28" viewBox="0 0 32 28"><rect x="7.5" y="2.5" width="11" height="5.5" rx="2" fill="#fff" stroke="#6a7688" stroke-width="2"/><rect x="1" y="6" width="30" height="4" fill="#6a7688"/><rect x="27" y="6" width="4" height="4" fill="#c8bcbc"/><rect x="4" y="7" width="25" height="19" rx="1.5" fill="url(#gFoldB)" stroke="url(#gFoldS)" stroke-width="2"/><rect x="6" y="6" width="13" height="2" fill="#f8d060"/></svg>
<svg class="a" style="left:37px;top:174px;" width="32" height="28" viewBox="0 0 32 28"><rect x="7.5" y="2.5" width="11" height="5.5" rx="2" fill="#fff" stroke="#6a7688" stroke-width="2"/><rect x="1" y="6" width="30" height="4" fill="#6a7688"/><rect x="27" y="6" width="4" height="4" fill="#c8bcbc"/><rect x="4" y="7" width="25" height="19" rx="1.5" fill="url(#gFoldB)" stroke="url(#gFoldS)" stroke-width="2"/><rect x="6" y="6" width="13" height="2" fill="#f8d060"/></svg>
<svg class="a" style="left:37px;top:208px;" width="32" height="28" viewBox="0 0 32 28"><rect x="7.5" y="2.5" width="11" height="5.5" rx="2" fill="#fff" stroke="#6a7688" stroke-width="2"/><rect x="1" y="6" width="30" height="4" fill="#6a7688"/><rect x="27" y="6" width="4" height="4" fill="#c8bcbc"/><rect x="4" y="7" width="25" height="19" rx="1.5" fill="url(#gFoldB)" stroke="url(#gFoldS)" stroke-width="2"/><rect x="6" y="6" width="13" height="2" fill="#f8d060"/></svg>
<svg class="a" style="left:37px;top:242px;" width="32" height="28" viewBox="0 0 32 28"><rect x="7.5" y="2.5" width="11" height="5.5" rx="2" fill="#fff" stroke="#6a7688" stroke-width="2"/><rect x="1" y="6" width="30" height="4" fill="#6a7688"/><rect x="27" y="6" width="4" height="4" fill="#c8bcbc"/><rect x="4" y="7" width="25" height="19" rx="1.5" fill="url(#gFoldB)" stroke="url(#gFoldS)" stroke-width="2"/><rect x="6" y="6" width="13" height="2" fill="#f8d060"/></svg>
<svg class="a" style="left:37px;top:276px;" width="32" height="28" viewBox="0 0 32 28"><rect x="7.5" y="2.5" width="11" height="5.5" rx="2" fill="#fff" stroke="#6a7688" stroke-width="2"/><rect x="1" y="6" width="30" height="4" fill="#6a7688"/><rect x="27" y="6" width="4" height="4" fill="#c8bcbc"/><rect x="4" y="7" width="25" height="19" rx="1.5" fill="url(#gFoldB)" stroke="url(#gFoldS)" stroke-width="2"/><rect x="6" y="6" width="13" height="2" fill="#f8d060"/></svg>
<svg class="a" style="left:16px;top:323px;" width="10" height="14" viewBox="0 0 10 14"><path d="M1.5 1 L7.5 7 L1.5 13" fill="none" stroke="#808080" stroke-width="2"/></svg>
<svg class="a" style="left:36px;top:312px;" width="36" height="32" viewBox="0 0 36 32"><rect x="8" y="4" width="11" height="6" rx="2" fill="#fff" stroke="#d8a858" stroke-width="2"/><rect x="2" y="8" width="20" height="4" fill="#806888"/><rect x="6" y="10" width="18" height="7" fill="#ffeeb0"/><path d="M14 16 H34 L25 28 H16 Z" fill="#a8dcff" stroke="#3848a8" stroke-width="2"/><path d="M31 2 H26 a2.5 2.5 0 0 0 -2.5 2.5 V10 a2.5 2.5 0 0 0 2.5 2.5 H31" fill="none" stroke="#1a5a9a" stroke-width="2.5"/><path d="M8.5 16 L15.5 30 H1.5 Z" fill="#ffd868" stroke="#d08828" stroke-width="1.8" stroke-linejoin="round"/><path d="M8.5 20 V25.5 M8.5 27 V28.5" stroke="#3a1a00" stroke-width="2"/></svg>
<svg class="a" style="left:37px;top:344px;" width="32" height="28" viewBox="0 0 32 28"><rect x="7.5" y="2.5" width="11" height="5.5" rx="2" fill="#fff" stroke="#6a7688" stroke-width="2"/><rect x="1" y="6" width="30" height="4" fill="#6a7688"/><rect x="27" y="6" width="4" height="4" fill="#c8bcbc"/><rect x="4" y="7" width="25" height="19" rx="1.5" fill="url(#gFoldB)" stroke="url(#gFoldS)" stroke-width="2"/><rect x="6" y="6" width="13" height="2" fill="#f8d060"/></svg>
<svg class="a" style="left:37px;top:378px;" width="32" height="28" viewBox="0 0 32 28"><rect x="7.5" y="2.5" width="11" height="5.5" rx="2" fill="#fff" stroke="#6a7688" stroke-width="2"/><rect x="1" y="6" width="30" height="4" fill="#6a7688"/><rect x="27" y="6" width="4" height="4" fill="#c8bcbc"/><rect x="4" y="7" width="25" height="19" rx="1.5" fill="url(#gFoldB)" stroke="url(#gFoldS)" stroke-width="2"/><rect x="6" y="6" width="13" height="2" fill="#f8d060"/></svg>
<svg class="a" style="left:37px;top:412px;" width="32" height="28" viewBox="0 0 32 28"><rect x="7.5" y="2.5" width="11" height="5.5" rx="2" fill="#fff" stroke="#6a7688" stroke-width="2"/><rect x="1" y="6" width="30" height="4" fill="#6a7688"/><rect x="27" y="6" width="4" height="4" fill="#c8bcbc"/><rect x="4" y="7" width="25" height="19" rx="1.5" fill="url(#gFoldB)" stroke="url(#gFoldS)" stroke-width="2"/><rect x="6" y="6" width="13" height="2" fill="#f8d060"/></svg>
<svg class="a" style="left:37px;top:446px;" width="32" height="28" viewBox="0 0 32 28"><rect x="7.5" y="2.5" width="11" height="5.5" rx="2" fill="#fff" stroke="#6a7688" stroke-width="2"/><rect x="1" y="6" width="30" height="4" fill="#6a7688"/><rect x="27" y="6" width="4" height="4" fill="#c8bcbc"/><rect x="4" y="7" width="25" height="19" rx="1.5" fill="url(#gFoldB)" stroke="url(#gFoldS)" stroke-width="2"/><rect x="6" y="6" width="13" height="2" fill="#f8d060"/></svg>
<svg class="a" style="left:37px;top:480px;" width="32" height="28" viewBox="0 0 32 28"><rect x="7.5" y="2.5" width="11" height="5.5" rx="2" fill="#fff" stroke="#6a7688" stroke-width="2"/><rect x="1" y="6" width="30" height="4" fill="#6a7688"/><rect x="27" y="6" width="4" height="4" fill="#c8bcbc"/><rect x="4" y="7" width="25" height="19" rx="1.5" fill="url(#gFoldB)" stroke="url(#gFoldS)" stroke-width="2"/><rect x="6" y="6" width="13" height="2" fill="#f8d060"/></svg>
<svg class="a" style="left:37px;top:514px;" width="32" height="28" viewBox="0 0 32 28"><rect x="7.5" y="2.5" width="11" height="5.5" rx="2" fill="#fff" stroke="#6a7688" stroke-width="2"/><rect x="1" y="6" width="30" height="4" fill="#6a7688"/><rect x="27" y="6" width="4" height="4" fill="#c8bcbc"/><rect x="4" y="7" width="25" height="19" rx="1.5" fill="url(#gFoldB)" stroke="url(#gFoldS)" stroke-width="2"/><rect x="6" y="6" width="13" height="2" fill="#f8d060"/></svg>
<svg class="a" style="left:37px;top:548px;" width="32" height="28" viewBox="0 0 32 28"><rect x="7.5" y="2.5" width="11" height="5.5" rx="2" fill="#fff" stroke="#6a7688" stroke-width="2"/><rect x="1" y="6" width="30" height="4" fill="#6a7688"/><rect x="27" y="6" width="4" height="4" fill="#c8bcbc"/><rect x="4" y="7" width="25" height="19" rx="1.5" fill="url(#gFoldB)" stroke="url(#gFoldS)" stroke-width="2"/><rect x="6" y="6" width="13" height="2" fill="#f8d060"/></svg>
</div>
<svg class="a" style="left:10px;top:810px;" width="32" height="30" viewBox="0 0 32 30"><rect x="2.5" y="2.5" width="27" height="25" fill="#f4f6fa" stroke="#7080a0" stroke-width="2"/><rect x="2.5" y="2.5" width="27" height="5" fill="#8a98b0"/><path d="M3 12 H29 M3 17 H29 M3 22 H29" stroke="#b8c0d0" stroke-width="1.5"/><path d="M11 7 V27" stroke="#b8c0d0" stroke-width="1.5"/></svg>
<svg class="a" style="left:210px;top:806px;" width="40" height="40" viewBox="0 0 40 40"><rect x="7" y="7" width="10" height="10" fill="url(#gOut)" stroke="#0a60a8" stroke-width="2"/><rect x="7" y="25" width="10" height="10" fill="url(#gOut)" stroke="#0a60a8" stroke-width="2"/><rect x="20" y="10" width="12" height="1.6" fill="#c0ecff"/><rect x="20" y="12" width="12" height="2" fill="#0a4a88"/><rect x="20" y="28" width="12" height="1.6" fill="#c0ecff"/><rect x="20" y="30" width="12" height="2" fill="#0a4a88"/><rect x="21" y="19" width="4" height="4" fill="#fff" stroke="#0a60a8" stroke-width="2"/><rect x="28" y="20" width="4" height="2" fill="#0a4a88"/></svg>
<svg class="a" style="left:395px;top:855px;" width="36" height="32" viewBox="0 0 36 32"><rect x="3" y="6" width="27" height="23" fill="url(#gLB)" stroke="#8a7a50" stroke-width="2"/><rect x="3" y="6" width="22" height="6" fill="#5a98d8"/><path d="M19 17 L23 13" stroke="#000" stroke-width="2"/><path d="M22 14 L28 8" stroke="#1a8a3a" stroke-width="6"/><ellipse cx="30.5" cy="5.5" rx="4.5" ry="3.5" transform="rotate(45 30.5 5.5)" fill="#70c050" stroke="#1a8a3a" stroke-width="1.5"/></svg>
<svg class="a" style="left:492px;top:1140px;" width="34" height="36" viewBox="0 0 34 36"><path d="M3 3 H25 Q28 8 25 14 Q22 24 29 31 H3 Z" fill="#e4eefa" stroke="#8890a8" stroke-width="2"/><path d="M3 15 H25 M16 3 V31" stroke="#a8b8e0" stroke-width="1.5"/><circle cx="13" cy="11" r="5" fill="#e02020"/><path d="M10 20 L18 34 H2 Z" fill="#ffe090" stroke="#e09a30" stroke-width="2" stroke-linejoin="round"/><path d="M10 24 V29 M10 30.5 V32" stroke="#2a1a00" stroke-width="2"/></svg>
<svg class="a" style="left:690px;top:1142px;" width="36" height="32" viewBox="0 0 36 32"><rect x="3" y="3" width="30" height="26" fill="#fff" stroke="#4a80c8" stroke-width="2"/><rect x="3" y="3" width="30" height="3.5" fill="#3a74c8"/><path d="M5 8.5 H31" stroke="#c8d8f0" stroke-width="1"/><rect x="16" y="12" width="5" height="5" fill="#6080b8"/><rect x="5.5" y="20" width="5" height="5" fill="#6080b8"/><rect x="26" y="20" width="5" height="5" fill="#6080b8"/><path d="M21 14.5 H32 M18.5 17 V22.5 M10.5 22.5 H26" stroke="#6080b8" stroke-width="2"/></svg>
<svg class="a" style="left:935px;top:1136px;" width="40" height="40" viewBox="0 0 40 40"><g stroke="#1a3a6a" stroke-width="2" fill="none"><path d="M5 8 L14.5 17.5 M14.5 8 L5 17.5 M17 11 H24.5 M17 15.2 H24.5 M27.5 9 Q27.5 6 31 6 Q34.5 6 34.5 9 Q34.5 12 31 13.5 V16"/><path d="M5 24.5 L9.7 29 L14.5 24.5 M9.7 29 V34 M17 27 H24.5 M17 31.5 H24.5 M27.5 25 Q27.5 22 31 22 Q34.5 22 34.5 25 Q34.5 28 31 29.5 V32"/></g><rect x="30" y="17.5" width="2" height="2.2" fill="#1a3a6a"/><rect x="30" y="33.5" width="2" height="2.2" fill="#1a3a6a"/></svg>
<svg class="a" style="left:1174px;top:1140px;" width="24" height="36" viewBox="0 0 24 36"><path d="M7 8 V33 M7 17 H15 M7 29 H15" stroke="#707888" stroke-width="2"/><circle cx="7" cy="6.5" r="5" fill="#4a9a50"/><circle cx="17" cy="17" r="5" fill="#4a9a50"/><circle cx="17" cy="28.5" r="5" fill="#4a9a50"/></svg>
<svg class="a" style="left:1750px;top:1137px;" width="32" height="34" viewBox="0 0 32 34"><path d="M3.5 3 H29 V6.5 L20.5 14.5 V27 L12.5 31 V14.5 L3.5 6.5 Z" fill="url(#gFilt)" stroke="#7a88a8" stroke-width="2" stroke-linejoin="miter"/><path d="M15 14.5 H20" stroke="#7a88a8" stroke-width="1.5"/></svg>
<svg class="a" style="left:498px;top:1260px;" width="14" height="18" viewBox="0 0 14 18"><path d="M3 2 L9.5 8.5 L3 15" fill="none" stroke="#808080" stroke-width="2"/></svg>
<svg class="a" style="left:525px;top:1254px;" width="24" height="26" viewBox="0 0 24 26"><path d="M12 3 L22 22 H2 Z" fill="#ffd060" stroke="#d89028" stroke-width="2.5" stroke-linejoin="round"/><path d="M12 8.5 V15.5" stroke="#7a5010" stroke-width="3" stroke-linecap="round"/><circle cx="12" cy="19" r="1.8" fill="#7a5010"/></svg>
<svg class="a" style="left:777px;top:1215px;" width="18" height="10" viewBox="0 0 18 10"><path d="M3 8 L8.5 2.5 L14 8" fill="none" stroke="#8a8a8a" stroke-width="1.3"/></svg>
<svg class="a" style="left:1930px;top:138px;" width="38" height="34" viewBox="0 0 38 34"><circle cx="11" cy="7" r="4.2" fill="#dce4f0" stroke="#4a7ab0" stroke-width="2"/><path d="M6 31 V24 H4 V16 a6 6 0 0 1 12 0 V31 Z" fill="#c8d8ec" stroke="#4a7ab0" stroke-width="2"/><circle cx="23" cy="19" r="10" fill="#eef4fa" stroke="#2a4a90" stroke-width="2.2"/><path d="M19.5 15.5 a3.5 3.5 0 1 1 5 3.2 q-1.5 1 -1.5 3" fill="none" stroke="#1a3a8a" stroke-width="2.4"/><circle cx="23" cy="25" r="1.6" fill="#1a3a8a"/></svg>
<svg class="a" style="left:2314px;top:138px;" width="30" height="30" viewBox="0 0 30 30"><rect x="1" y="2" width="21" height="21" fill="#e0f0f8" stroke="#a0a8c0" stroke-width="2"/><rect x="5" y="6" width="20" height="20" fill="url(#gLB)" stroke="#8a94ac" stroke-width="2"/><rect x="8.5" y="14" width="13" height="2.3" fill="#003a7a"/></svg>
<div class="a" style="left:2349px;top:134px;width:1px;height:34px;background:#a8a8a8;"></div>
<svg class="a" style="left:2357px;top:137px;" width="34" height="30" viewBox="0 0 34 30"><path d="M3 14 L12 4 V9 H26 a2 2 0 0 1 2 2 V17 a2 2 0 0 1 -2 2 H12 V24 Z" fill="#f2f2f2" stroke="#b0b0b0" stroke-width="2" stroke-linejoin="round"/></svg>
<svg class="a" style="left:2397px;top:137px;" width="34" height="30" viewBox="0 0 34 30"><path d="M29 14 L20 4 V9 H6 a2 2 0 0 0 -2 2 V17 a2 2 0 0 0 2 2 H20 V24 Z" fill="#f2f2f2" stroke="#b0b0b0" stroke-width="2" stroke-linejoin="round"/></svg>
<svg class="a" style="left:1938px;top:184px;" width="32" height="36" viewBox="0 0 32 36"><path d="M3 2 H13 L18 7 V23 H3 Z" fill="#eef2fa" stroke="#a08848" stroke-width="2"/><path d="M11 9 H22 L28 15 V32 H11 Z" fill="#eef2fa" stroke="#a08848" stroke-width="2"/><path d="M22 9 V15 H28" fill="#e0c888" stroke="#a08848" stroke-width="1.5"/><path d="M6 11 H9 M6 15 H9 M6 19 H9 M15 19 H20 M15 23 H25 M15 27 H25" stroke="#8898c0" stroke-width="1.8"/></svg>
<svg class="a" style="left:2090px;top:180px;" width="50" height="45" viewBox="0 0 50 45"><defs><clipPath id="cpS"><rect x="8" y="4" width="34" height="34"/></clipPath></defs><g clip-path="url(#cpS)"><g transform="translate(24 25) rotate(-41)"><rect x="-24" y="-6" width="17" height="12" fill="url(#gTip)"/><path d="M-8 -6.5 Q-4 0 -8 6.5 H0 Q3 0 0 -6.5 Z" fill="#b8b0c0" stroke="#9a7848" stroke-width="1.6"/><rect x="0" y="-6" width="18" height="12" rx="3" fill="url(#gPen)" stroke="#e0a040" stroke-width="1"/><rect x="9" y="-1.2" width="5" height="2.4" fill="#3058a8"/></g></g><circle cx="19" cy="16.5" r="7.8" fill="#f4f9fc" stroke="#3a5080" stroke-width="1.6"/><text x="14.6" y="21.5" font-family="Liberation Sans" font-weight="700" font-size="13" fill="#3a5080">?</text></svg>
<svg class="a" style="left:2224px;top:184px;" width="34" height="34" viewBox="0 0 34 34"><rect x="2" y="11" width="10" height="10" fill="#eef2fa" stroke="#b0a070" stroke-width="2"/><rect x="20" y="2" width="10" height="12" fill="#eef2fa" stroke="#b0a070" stroke-width="2"/><rect x="20" y="20" width="10" height="12" fill="#eef2fa" stroke="#b0a070" stroke-width="2"/><path d="M12 16 L20 8 M12 16 L20 26" stroke="#8a90b0" stroke-width="1.5"/><path d="M5 15 H9 M23 6 H27 M23 24 H27" stroke="#8898c0" stroke-width="1.5"/></svg>
<svg class="a" style="left:1935px;top:234px;" width="34" height="36" viewBox="0 0 34 36"><path d="M2 3 L14 5 V30 L2 28 Z" fill="#eef4f8" stroke="#506880" stroke-width="1.8"/><path d="M14 5 L31 3 V28 L14 30 Z" fill="#eef4f8" stroke="#506880" stroke-width="1.8"/><path d="M5 9 L11 10 M5 13 L11 14 M5 17 L11 18" stroke="#8898a8" stroke-width="1.3"/><path d="M19 3 H26 V33 L22.5 29 L19 33 Z" fill="#78b8f0" stroke="#1a5a9a" stroke-width="1.5"/></svg>
<svg class="a" style="left:2110px;top:237px;" width="32" height="32" viewBox="0 0 32 32"><path d="M3 4 H9 L11 7 H29 V26 H3 Z" fill="#c8e0f8" stroke="#4a6aa0" stroke-width="2"/><rect x="11" y="2" width="6" height="4" fill="#9ab030"/><rect x="21" y="2" width="6" height="4" fill="#9ab030"/><path d="M7 13 H26 M7 17 H26" stroke="#4a5a90" stroke-width="2"/><path d="M8 26 V30 M13 26 V30 M18 26 V30 M23 26 V30" stroke="#4a5a80" stroke-width="1.5"/></svg>
<svg class="a" style="left:1936px;top:344px;" width="12" height="14" viewBox="0 0 12 14"><path d="M2 1.5 L8 7 L2 12.5" fill="none" stroke="#808080" stroke-width="1.8"/></svg>
<svg class="a" style="left:1957px;top:334px;" width="36" height="34" viewBox="0 0 36 34"><path d="M3 10.6 V17.5 L16.7 29.7 V22.1 Z" fill="url(#gSpine)" stroke="#8a8060" stroke-width="1.8" stroke-linejoin="round"/><path d="M16.7 22.1 L32.4 16.2 L32.6 21 L16.7 29.7 Z" fill="#e4ecf0" stroke="#707880" stroke-width="1.5" stroke-linejoin="round"/><path d="M3.2 10.6 L19.1 2.5 L32.4 16.2 L16.7 22.1 Z" fill="#80b4f0" stroke="#8a8060" stroke-width="2" stroke-linejoin="round"/><ellipse cx="17.5" cy="11.5" rx="4.2" ry="2.8" transform="rotate(-20 17.5 11.5)" fill="#fff" stroke="#8a8060" stroke-width="1.8"/></svg>
<svg class="a" style="left:1936px;top:377px;" width="12" height="14" viewBox="0 0 12 14"><path d="M2 1.5 L8 7 L2 12.5" fill="none" stroke="#808080" stroke-width="1.8"/></svg>
<svg class="a" style="left:1957px;top:367px;" width="36" height="34" viewBox="0 0 36 34"><path d="M3 10.6 V17.5 L16.7 29.7 V22.1 Z" fill="url(#gSpine)" stroke="#8a8060" stroke-width="1.8" stroke-linejoin="round"/><path d="M16.7 22.1 L32.4 16.2 L32.6 21 L16.7 29.7 Z" fill="#e4ecf0" stroke="#707880" stroke-width="1.5" stroke-linejoin="round"/><path d="M3.2 10.6 L19.1 2.5 L32.4 16.2 L16.7 22.1 Z" fill="#80b4f0" stroke="#8a8060" stroke-width="2" stroke-linejoin="round"/><ellipse cx="17.5" cy="11.5" rx="4.2" ry="2.8" transform="rotate(-20 17.5 11.5)" fill="#fff" stroke="#8a8060" stroke-width="1.8"/></svg>
<svg class="a" style="left:1936px;top:410px;" width="12" height="14" viewBox="0 0 12 14"><path d="M2 1.5 L8 7 L2 12.5" fill="none" stroke="#808080" stroke-width="1.8"/></svg>
<svg class="a" style="left:1957px;top:400px;" width="36" height="34" viewBox="0 0 36 34"><path d="M3 10.6 V17.5 L16.7 29.7 V22.1 Z" fill="url(#gSpine)" stroke="#8a8060" stroke-width="1.8" stroke-linejoin="round"/><path d="M16.7 22.1 L32.4 16.2 L32.6 21 L16.7 29.7 Z" fill="#e4ecf0" stroke="#707880" stroke-width="1.5" stroke-linejoin="round"/><path d="M3.2 10.6 L19.1 2.5 L32.4 16.2 L16.7 22.1 Z" fill="#80b4f0" stroke="#8a8060" stroke-width="2" stroke-linejoin="round"/><ellipse cx="17.5" cy="11.5" rx="4.2" ry="2.8" transform="rotate(-20 17.5 11.5)" fill="#fff" stroke="#8a8060" stroke-width="1.8"/></svg>
<svg class="a" style="left:1936px;top:443px;" width="12" height="14" viewBox="0 0 12 14"><path d="M2 1.5 L8 7 L2 12.5" fill="none" stroke="#808080" stroke-width="1.8"/></svg>
<svg class="a" style="left:1957px;top:433px;" width="36" height="34" viewBox="0 0 36 34"><path d="M3 10.6 V17.5 L16.7 29.7 V22.1 Z" fill="url(#gSpine)" stroke="#8a8060" stroke-width="1.8" stroke-linejoin="round"/><path d="M16.7 22.1 L32.4 16.2 L32.6 21 L16.7 29.7 Z" fill="#e4ecf0" stroke="#707880" stroke-width="1.5" stroke-linejoin="round"/><path d="M3.2 10.6 L19.1 2.5 L32.4 16.2 L16.7 22.1 Z" fill="#80b4f0" stroke="#8a8060" stroke-width="2" stroke-linejoin="round"/><ellipse cx="17.5" cy="11.5" rx="4.2" ry="2.8" transform="rotate(-20 17.5 11.5)" fill="#fff" stroke="#8a8060" stroke-width="1.8"/></svg>
<svg class="a" style="left:1936px;top:476px;" width="12" height="14" viewBox="0 0 12 14"><path d="M2 1.5 L8 7 L2 12.5" fill="none" stroke="#808080" stroke-width="1.8"/></svg>
<svg class="a" style="left:1957px;top:466px;" width="36" height="34" viewBox="0 0 36 34"><path d="M3 10.6 V17.5 L16.7 29.7 V22.1 Z" fill="url(#gSpine)" stroke="#8a8060" stroke-width="1.8" stroke-linejoin="round"/><path d="M16.7 22.1 L32.4 16.2 L32.6 21 L16.7 29.7 Z" fill="#e4ecf0" stroke="#707880" stroke-width="1.5" stroke-linejoin="round"/><path d="M3.2 10.6 L19.1 2.5 L32.4 16.2 L16.7 22.1 Z" fill="#80b4f0" stroke="#8a8060" stroke-width="2" stroke-linejoin="round"/><ellipse cx="17.5" cy="11.5" rx="4.2" ry="2.8" transform="rotate(-20 17.5 11.5)" fill="#fff" stroke="#8a8060" stroke-width="1.8"/></svg>
<svg class="a" style="left:1936px;top:509px;" width="12" height="14" viewBox="0 0 12 14"><path d="M2 1.5 L8 7 L2 12.5" fill="none" stroke="#808080" stroke-width="1.8"/></svg>
<svg class="a" style="left:1957px;top:499px;" width="36" height="34" viewBox="0 0 36 34"><path d="M3 10.6 V17.5 L16.7 29.7 V22.1 Z" fill="url(#gSpine)" stroke="#8a8060" stroke-width="1.8" stroke-linejoin="round"/><path d="M16.7 22.1 L32.4 16.2 L32.6 21 L16.7 29.7 Z" fill="#e4ecf0" stroke="#707880" stroke-width="1.5" stroke-linejoin="round"/><path d="M3.2 10.6 L19.1 2.5 L32.4 16.2 L16.7 22.1 Z" fill="#80b4f0" stroke="#8a8060" stroke-width="2" stroke-linejoin="round"/><ellipse cx="17.5" cy="11.5" rx="4.2" ry="2.8" transform="rotate(-20 17.5 11.5)" fill="#fff" stroke="#8a8060" stroke-width="1.8"/></svg>
<svg class="a" style="left:1936px;top:542px;" width="12" height="14" viewBox="0 0 12 14"><path d="M2 1.5 L8 7 L2 12.5" fill="none" stroke="#808080" stroke-width="1.8"/></svg>
<svg class="a" style="left:1957px;top:532px;" width="36" height="34" viewBox="0 0 36 34"><path d="M3 10.6 V17.5 L16.7 29.7 V22.1 Z" fill="url(#gSpine)" stroke="#8a8060" stroke-width="1.8" stroke-linejoin="round"/><path d="M16.7 22.1 L32.4 16.2 L32.6 21 L16.7 29.7 Z" fill="#e4ecf0" stroke="#707880" stroke-width="1.5" stroke-linejoin="round"/><path d="M3.2 10.6 L19.1 2.5 L32.4 16.2 L16.7 22.1 Z" fill="#80b4f0" stroke="#8a8060" stroke-width="2" stroke-linejoin="round"/><ellipse cx="17.5" cy="11.5" rx="4.2" ry="2.8" transform="rotate(-20 17.5 11.5)" fill="#fff" stroke="#8a8060" stroke-width="1.8"/></svg>
<svg class="a" style="left:1936px;top:575px;" width="12" height="14" viewBox="0 0 12 14"><path d="M2 1.5 L8 7 L2 12.5" fill="none" stroke="#808080" stroke-width="1.8"/></svg>
<svg class="a" style="left:1957px;top:565px;" width="36" height="34" viewBox="0 0 36 34"><path d="M3 10.6 V17.5 L16.7 29.7 V22.1 Z" fill="url(#gSpine)" stroke="#8a8060" stroke-width="1.8" stroke-linejoin="round"/><path d="M16.7 22.1 L32.4 16.2 L32.6 21 L16.7 29.7 Z" fill="#e4ecf0" stroke="#707880" stroke-width="1.5" stroke-linejoin="round"/><path d="M3.2 10.6 L19.1 2.5 L32.4 16.2 L16.7 22.1 Z" fill="#80b4f0" stroke="#8a8060" stroke-width="2" stroke-linejoin="round"/><ellipse cx="17.5" cy="11.5" rx="4.2" ry="2.8" transform="rotate(-20 17.5 11.5)" fill="#fff" stroke="#8a8060" stroke-width="1.8"/></svg>
<svg class="a" style="left:1939px;top:1472px;" width="6" height="32" viewBox="0 0 6 32"><rect x="1" y="1" width="4" height="4" fill="url(#gGrip)"/><rect x="1" y="9" width="4" height="4" fill="url(#gGrip)"/><rect x="1" y="17" width="4" height="4" fill="url(#gGrip)"/><rect x="1" y="25" width="4" height="4" fill="url(#gGrip)"/></svg>
<div class="a" style="left:2390px;top:1466px;width:82px;height:23px;background:#e6e6e6;"></div>
<div class="a" style="left:2390px;top:1466px;width:82px;height:1px;background:#a8a8a8;"></div>
<div class="a" style="left:2390px;top:1466px;width:1px;height:23px;background:#a8a8a8;"></div>
<div class="a" style="left:2449px;top:1467px;width:23px;height:22px;background:#00b020;"></div>
<svg class="a" style="left:2480px;top:1472px;" width="22" height="18" viewBox="0 0 22 18"><rect x="1" y="1" width="14" height="9" fill="#d0f0d8" stroke="#a89078" stroke-width="1.5"/><rect x="4" y="4" width="14" height="9" fill="#d0f0e8" stroke="#a89078" stroke-width="1.5"/><rect x="7" y="7" width="13" height="9" fill="#60c070" stroke="#a89078" stroke-width="1.5"/></svg>
<svg class="a" style="left:2511px;top:1472px;" width="6" height="32" viewBox="0 0 6 32"><rect x="1" y="1" width="4" height="4" fill="url(#gGrip)"/><rect x="1" y="9" width="4" height="4" fill="url(#gGrip)"/><rect x="1" y="17" width="4" height="4" fill="url(#gGrip)"/><rect x="1" y="25" width="4" height="4" fill="url(#gGrip)"/></svg>
<svg class="a" style="left:2524px;top:1464px;" width="32" height="44" viewBox="0 0 32 44"><circle cx="16" cy="15" r="12" fill="#fff4c8" opacity="0.6"/><path d="M11.5 25 C6 21 6.5 7 16 7 C25.5 7 26 21 20.5 25 V27 H11.5 Z" fill="url(#gBulb)" stroke="#f0a820" stroke-width="2"/><rect x="11" y="27" width="10" height="9" rx="1.5" fill="#6a7e98"/><rect x="13" y="29" width="6" height="2" fill="#c8d4e0"/></svg>
<svg class="a" style="left:2380px;top:1479px;" width="180" height="26" viewBox="0 0 180 26"><g transform="translate(21.5,0)"><path d="M12 0.5 L13 3.5 M3.5 4.5 H22.5 M4.5 4.5 V12 Q4.5 18 1 23 M7 11.5 H22 M14.5 5.5 V11.5 Q13.5 18.5 6.5 23 M14.5 12.5 Q17.5 19 23 22.5" transform="translate(1,1)" fill="none" stroke="#ffffff" stroke-width="1.5"/><path d="M12 0.5 L13 3.5 M3.5 4.5 H22.5 M4.5 4.5 V12 Q4.5 18 1 23 M7 11.5 H22 M14.5 5.5 V11.5 Q13.5 18.5 6.5 23 M14.5 12.5 Q17.5 19 23 22.5" fill="none" stroke="#8a8a8a" stroke-width="1.4"/></g><g transform="translate(46.0,0)"><path d="M12 0.5 Q8 6 1 10 M12 0.5 Q16 6 23 10 M6.5 9.5 H17.5 M2.5 14 H21.5 M12 9.5 V23 L10.5 22 M7.5 16.5 L3.5 21 M16.5 16.5 L20.5 21" transform="translate(1,1)" fill="none" stroke="#ffffff" stroke-width="1.5"/><path d="M12 0.5 Q8 6 1 10 M12 0.5 Q16 6 23 10 M6.5 9.5 H17.5 M2.5 14 H21.5 M12 9.5 V23 L10.5 22 M7.5 16.5 L3.5 21 M16.5 16.5 L20.5 21" fill="none" stroke="#8a8a8a" stroke-width="1.4"/></g><g transform="translate(69.5,0)"><path d="M8 0.5 Q6.5 4.5 2 8 M6 5 H21.5 M6 10.5 H19.5 M6 5 V16 M1.5 16 H22.5 M13.5 5 V23.5" transform="translate(1,1)" fill="none" stroke="#ffffff" stroke-width="1.5"/><path d="M8 0.5 Q6.5 4.5 2 8 M6 5 H21.5 M6 10.5 H19.5 M6 5 V16 M1.5 16 H22.5 M13.5 5 V23.5" fill="none" stroke="#8a8a8a" stroke-width="1.4"/></g><g transform="translate(94.0,0)"><path d="M12 0.5 Q8 6 1 10 M12 0.5 Q16 6 23 10 M6.5 9.5 H17.5 M2.5 14 H21.5 M12 9.5 V23 L10.5 22 M7.5 16.5 L3.5 21 M16.5 16.5 L20.5 21" transform="translate(1,1)" fill="none" stroke="#ffffff" stroke-width="1.5"/><path d="M12 0.5 Q8 6 1 10 M12 0.5 Q16 6 23 10 M6.5 9.5 H17.5 M2.5 14 H21.5 M12 9.5 V23 L10.5 22 M7.5 16.5 L3.5 21 M16.5 16.5 L20.5 21" fill="none" stroke="#8a8a8a" stroke-width="1.4"/></g><g transform="translate(117.5,0)"><path d="M8 0.5 Q6.5 4.5 2 8 M6 5 H21.5 M6 10.5 H19.5 M6 5 V16 M1.5 16 H22.5 M13.5 5 V23.5" transform="translate(1,1)" fill="none" stroke="#ffffff" stroke-width="1.5"/><path d="M8 0.5 Q6.5 4.5 2 8 M6 5 H21.5 M6 10.5 H19.5 M6 5 V16 M1.5 16 H22.5 M13.5 5 V23.5" fill="none" stroke="#8a8a8a" stroke-width="1.4"/></g><g transform="translate(141.0,0)"><path d="M12 0.5 L13 3.5 M3.5 4.5 H22.5 M4.5 4.5 V12 Q4.5 18 1 23 M7 11.5 H22 M14.5 5.5 V11.5 Q13.5 18.5 6.5 23 M14.5 12.5 Q17.5 19 23 22.5" transform="translate(1,1)" fill="none" stroke="#ffffff" stroke-width="1.5"/><path d="M12 0.5 L13 3.5 M3.5 4.5 H22.5 M4.5 4.5 V12 Q4.5 18 1 23 M7 11.5 H22 M14.5 5.5 V11.5 Q13.5 18.5 6.5 23 M14.5 12.5 Q17.5 19 23 22.5" fill="none" stroke="#8a8a8a" stroke-width="1.4"/></g></svg>
<div class="a t" style="left:2312.81px;top:1481.72px;font-size:21px;line-height:21px;color:#8c8c8c;font-weight:400;transform:scaleX(1.0371);transform-origin:0 0;text-shadow:1px 1px 0 #fff;">CSDN @</div>
</body></html>
